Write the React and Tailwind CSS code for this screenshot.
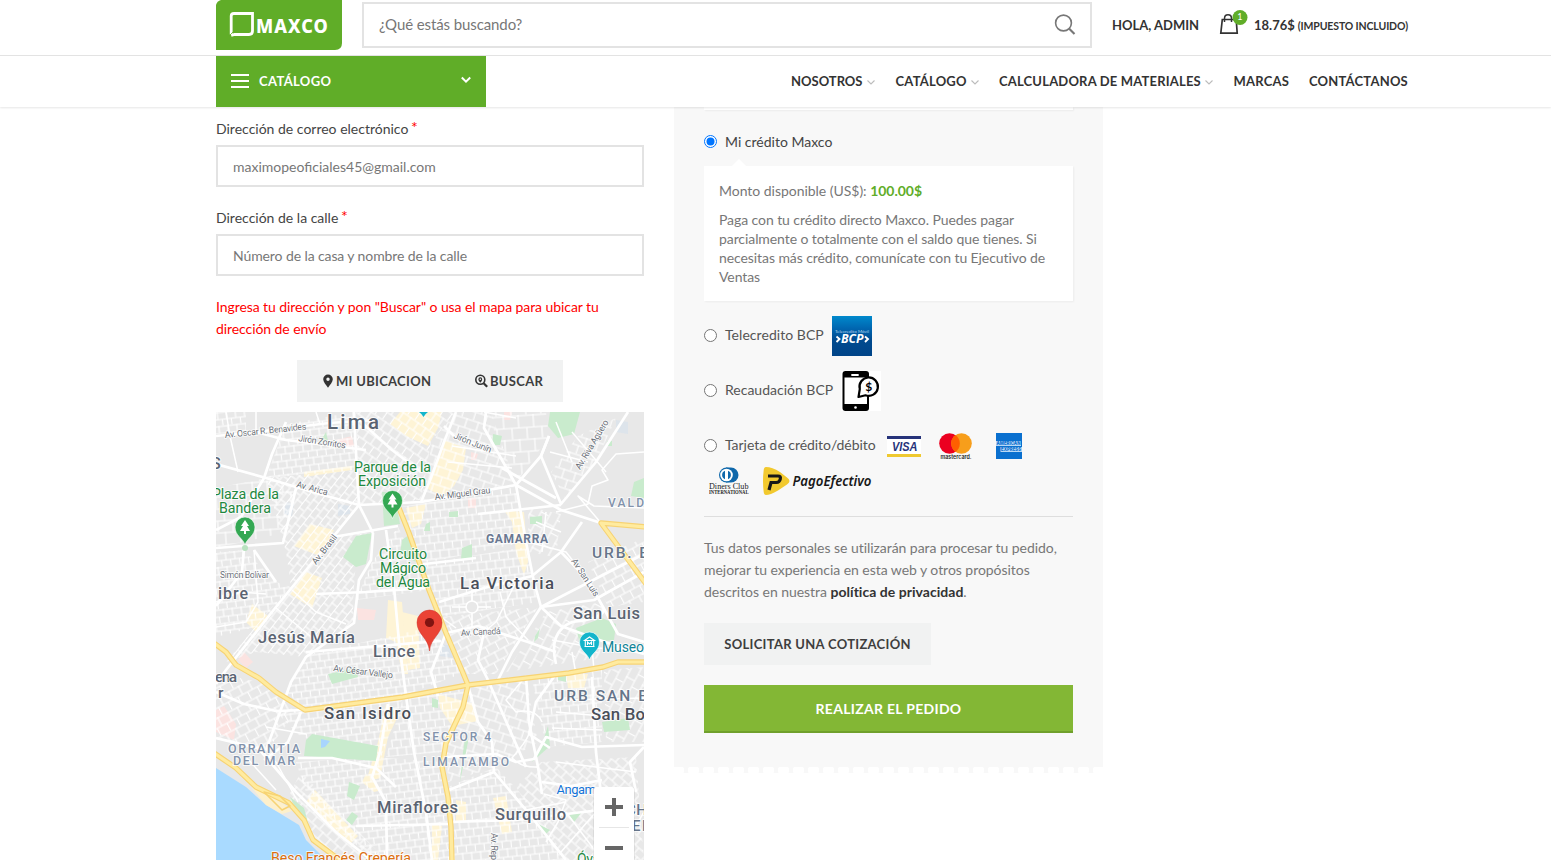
import React from "react";

const ROAD_LABEL = "#6b7078";

// Blocks of minor streets: [polygon, pattern id]
const BLOCKS = [
  ["0,0 30,0 30,20 0,22", "g1"],
  ["70,12 138,0 142,58 50,66", "g1"],
  ["50,66 142,58 143,92 120,124 75,175 70,140", "g2"],
  ["0,76 50,66 80,75 72,120 0,136", "g8"],
  ["0,140 28,138 60,170 75,175 40,215 0,225", "g1"],
  ["140,0 240,0 215,30 205,88 143,92", "g3"],
  ["240,0 275,0 300,73 205,90 216,30", "g4"],
  ["276,0 330,0 333,25 302,68 280,40", "g8"],
  ["120,124 155,121 140,148 137,190 75,175", "g2"],
  ["156,150 182,115 213,178 140,188", "g1"],
  ["185,95 300,75 310,130 200,153", "g5"],
  ["200,153 310,135 322,190 225,205", "g5"],
  ["75,175 137,190 138,211 90,245 40,240 10,250 60,190", "g2"],
  ["90,243 215,215 247,261 187,284 89,297 70,280", "g1"],
  ["225,205 322,195 280,262 250,262", "g6"],
  ["330,200 387,190 384,246 290,260", "g9"],
  ["312,95 345,102 340,145 312,140", "g9"],
  ["372,150 428,126 428,190 392,195", "g6"],
  ["362,24 400,6 380,50 350,88 335,60", "g4"],
  ["60,300 89,298 187,286 165,345 85,325", "g1"],
  ["187,286 250,274 228,340 170,345", "g5"],
  ["80,350 160,345 225,350 235,448 160,448 96,398", "g1"],
  ["85,360 170,448 125,448 97,425 72,385", "g7"],
  ["252,273 310,266 322,330 280,355 232,370 230,335", "g4"],
  ["315,264 386,258 386,330 330,335", "g5"],
  ["388,258 428,255 428,330 390,330", "g9"],
  ["232,375 280,355 322,400 350,448 236,448", "g5"],
  ["325,350 420,345 428,448 345,448 300,375", "g7"],
  ["0,262 45,270 80,300 50,340 0,325", "g6"],
];

const CREAM = [
  "184,0 226,0 222,16 212,34 190,24 174,12",
  "228,28 250,36 247,58 238,74 226,84 210,76 220,52",
  "288,98 308,100 312,150 308,163 300,140 296,110",
  "94,112 118,118 104,144 78,134",
  "90,160 106,166 96,196 74,182",
  "172,188 186,190 192,262 186,262 180,230 170,226",
  "186,200 202,204 204,256 192,258",
  "88,60 136,54 136,58 88,65",
  "170,292 184,300 172,325 164,366 150,370 162,330",
  "222,282 258,292 262,309 236,314 224,296",
  "99,378 142,424 134,432 90,390",
  "240,388 250,390 250,410 240,410",
  "150,362 166,378 158,380 146,370",
  "36,192 52,204 40,220 30,210",
  "216,412 226,414 222,448 216,448",
  "277,386 290,384 296,420 286,422",
  "350,262 372,262 368,276 352,276",
  "190,96 210,92 205,112 196,116",
];

const GREEN = [
  "334,0 364,0 358,22 342,26 332,14",
  "127,145 140,124 156,121 150,152 140,155",
  "90,328 96,322 162,334 160,349 88,344",
  "166,80 178,80 184,112 168,114",
  "186,128 194,122 200,150 184,142",
  "246,136 256,132 256,147 245,147",
  "314,105 326,104 326,112 314,112",
  "360,216 386,206 400,212 398,228 364,232",
  "386,310 412,306 414,318 388,320",
  "133,370 144,374 138,388 131,384",
  "112,262 140,256 142,265 116,272",
  "418,70 428,66 428,86 415,84",
  "277,22 286,24 284,33 276,33",
  "391,29 396,29 396,34 391,34",
  "110,20 112,29 104,30",
  "210,112 214,110 214,119 208,119",
  "216,286 222,288 222,296 216,295",
  "244,370 252,330 250,320 247,340",
  "326,332 332,314 334,334 316,350",
  "136,400 142,404 136,413 130,408",
  "322,412 334,418 330,422 324,418",
  "342,260 350,262 350,270 342,268",
  "74,385 88,396 94,418 82,402",
  "319,224 324,216 322,226 318,230",
  "353,403 366,400 358,410",
  "233,100 242,99 242,105 233,105",
];

const PINK = [
  "120,28 136,24 138,34 126,36",
  "28,240 37,250 30,256 22,248",
  "0,298 8,294 20,312 18,328 0,320",
  "141,196 160,198 158,208 142,208",
  "288,0 296,0 294,8 288,8",
  "252,86 260,86 260,96 252,96",
  "255,40 262,42 260,48 255,48",
];

const ROADS = [
  "M0 24L40 20L113 11L160 8",
  "M70 10L56 42L48 66L25 105L0 118",
  "M0 52L50 66L100 81L143 93L205 90L300 73L325 44L333 24",
  "M138 0L141 60L143 93L157 121",
  "M40 20L70 28L150 38",
  "M145 10L176 38L205 60",
  "M240 0L228 30L215 66L205 90",
  "M228 14L240 26L270 36",
  "M300 73L345 98L385 111",
  "M270 0L268 16L300 73L310 130L318 170L325 195L345 214L400 234L428 242",
  "M333 24L325 44L345 92L380 50L412 0",
  "M286 56L340 86",
  "M143 93L117 125L60 195L10 258L0 272",
  "M157 121L155 148L143 168L138 211L90 245L75 270L50 338",
  "M0 136L67 131L72 110L80 76",
  "M28 136L26 160L0 194",
  "M38 138L60 170",
  "M100 182L150 180L212 176",
  "M117 125L182 114",
  "M200 153L260 146",
  "M262 102L345 93",
  "M223 190L268 176L316 164L345 140L366 110",
  "M345 140L372 168L387 195L402 222L428 230",
  "M325 195L350 182L428 142",
  "M325 195L378 188L428 160",
  "M325 195L296 240L282 268",
  "M340 252Q332 220 356 210Q392 206 387 195",
  "M230 221L262 214L312 230L340 240",
  "M90 240L150 235L225 229",
  "M170 118L178 175L183 230L190 284L198 340L210 400L216 448",
  "M230 221L215 260L222 284",
  "M268 220L262 248L272 268L310 355",
  "M0 280L28 292L60 299L89 298",
  "M0 326L42 336L80 380L120 420L155 448",
  "M85 300L72 330L48 348",
  "M82 346L116 346L160 356L180 375",
  "M172 292L164 340L156 365L170 390L171 448",
  "M228 345L280 342L300 350L318 347L330 325L366 335L428 333",
  "M252 273L262 310L276 330L278 360L310 398L350 448",
  "M233 378L278 360",
  "M140 414L234 412",
  "M234 410L300 408L384 398",
  "M310 264L313 310L322 355L326 382",
  "M340 262L320 290L313 322L334 336",
  "M376 265L380 340L386 390",
  "M326 370L355 374L386 368",
  "M428 335L414 350L420 380",
];

const SIDE_ROADS = [
  "M428 40L400 42L386 58L392 68L376 74L372 92L340 100",
  "M385 111L362 84L378 94L428 96",
  "M10 0L14 24L22 60M40 0L40 20M100 0L104 12",
  "M0 190L24 180L50 182M38 138L42 190L30 210L0 215",
  "M76 178L100 200L130 212M60 196L104 232",
  "M334 40L372 50M340 10L356 50M356 20L390 60",
  "M320 110L345 120M312 130L350 140L372 168M330 100L326 140",
  "M268 0L300 6M236 34L300 44M232 50L296 56",
  "M40 336L60 350L82 390M30 345L60 378M50 315L90 322",
  "M322 355Q306 356 296 346Q310 330 313 322",
  "M310 264L290 288L300 300Q320 296 326 310",
  "M340 300L386 304M336 316L386 318M350 288L428 286",
  "M340 350L420 360M328 382L350 388L342 410L330 430",
  "M350 400L380 440M310 398L350 390M380 400L345 440M428 400L400 448",
  "M284 180L290 205L312 228M300 170L280 210L268 220M225 205L240 216",
  "M356 240L360 262M376 236L378 258M336 228L380 236L428 238",
];

const YELLOW = [
  "M183 96L193 121L213 178L230 221L247 261L252 273L247 295L230 331L226 355L232 385L235 415L236 450",
  "M-2 231L10 240L20 253L43 266L60 280L89 298L187 285L252 273L353 261L387 255L402 250L430 250",
  "M430 115L385 111L430 172",
  "M-2 341L20 356L40 375L73 391L88 408L97 428L117 443L132 452",
];

function Label({ x, y, w, size = 15, color = "#5b6472", weight = 500, r = 0, children }) {
  return (
    <text
      x={x}
      y={y}
      textLength={w}
      fontSize={size}
      fill={color}
      fontWeight={weight}
      transform={r ? `rotate(${r} ${x} ${y})` : undefined}
      stroke="#fff"
      strokeOpacity="0.75"
      strokeWidth="2"
      strokeLinejoin="round"
      paintOrder="stroke"
    >
      {children}
    </text>
  );
}

function Pin({ x, y, color, children }) {
  return (
    <g transform={`translate(${x} ${y})`}>
      <path d="M0 0C-2-7-10-9-10-18A10 10 0 0 1 10-18C10-9 2-7 0 0Z" fill={color} stroke="#fff" strokeWidth=".6" />
      {children}
    </g>
  );
}

function Grid({ id, a, w, h }) {
  return (
    <pattern id={id} width={w} height={h * 2} patternUnits="userSpaceOnUse" patternTransform={`rotate(${a})`}>
      <path d={`M0 1H${w}M0 ${h + 1}H${w}M1 0V${h + 1}M${w * 0.6} ${h + 1}V${h * 2}`} stroke="#fff" strokeWidth="1.1" fill="none" />
    </pattern>
  );
}

function Tree() {
  return <path d="M0-25L-4-19H-2L-5-14H-1V-11H1V-14H5L2-19H4Z" fill="#fff" />;
}

function CityMap() {
  return (
    <svg className="block h-full w-full" viewBox="0 0 428 448" fontFamily="Roboto, sans-serif">
      <defs>
        <Grid id="g1" a={-7} w={9} h={7} />
        <Grid id="g2" a={-52} w={10} h={6.5} />
        <Grid id="g3" a={35} w={9} h={9} />
        <Grid id="g4" a={18} w={12} h={9} />
        <Grid id="g5" a={-6} w={9} h={8} />
        <Grid id="g6" a={-28} w={11} h={9} />
        <Grid id="g7" a={42} w={10} h={8} />
        <Grid id="g8" a={-4} w={15} h={12} />
        <Grid id="g9" a={-62} w={14} h={9} />
      </defs>
      <rect width="428" height="448" fill="#e8e8e8" />
      {CREAM.map((p) => <polygon key={p} points={p} fill="#fef4d6" />)}
      {PINK.map((p) => <polygon key={p} points={p} fill="#fbe3e1" />)}
      <path d="M224 232l14 2v12l-14-2zM70 90l8 2-2 12-8-2zM122 92l12 2v8l-12 2zM400 8l12 2v12l-12-2z" fill="#dde4eb" />
      <g>
        {BLOCKS.map(([p, g]) => <polygon key={p} points={p} fill={`url(#${g})`} />)}
      </g>
      {GREEN.map((p) => <polygon key={p} points={p} fill="#c9ebcd" />)}
      <path d="M105 327l9 2-5 6-4 1z" fill="#a8d5fd" />
      <path d="M0 356L30 375L50 393L83 413L90 428L110 448H0Z" fill="#a9daff" />
      <path d="M36 376L50 393L66 402L76 399L50 378Z" fill="#fdf0cc" />
      <g fill="none" stroke="#fff" strokeWidth="1.5" strokeLinejoin="round">
        {SIDE_ROADS.map((d) => <path key={d} d={d} />)}
      </g>
      <g fill="none" stroke="#fff" strokeWidth="2.7" strokeLinejoin="round">
        {ROADS.map((d) => <path key={d} d={d} />)}
        <circle cx="256" cy="195" r="6" fill="#e8e8e8" strokeWidth="1.6" />
        <path d="M256 189V178M262 195H275M250 195H236M256 201V216" strokeWidth="1.6" />
      </g>
      <g fill="none" strokeLinejoin="round">
        {YELLOW.map((d) => <path key={d} d={d} stroke="#f7d374" strokeWidth="5.4" />)}
        {YELLOW.map((d) => <path key={d} d={d} stroke="#ffeb9f" strokeWidth="3.2" />)}
        <path d="M48 380L64 384L74 394L66 398Z" stroke="#f7d374" strokeWidth="1.6" />
      </g>

      <Label x={9} y={26} w={82} size={9} color={ROAD_LABEL} weight={400} r={-6}>Av. Oscar R. Benavides</Label>
      <Label x={82} y={29} w={48} size={9} color={ROAD_LABEL} weight={400} r={9}>Jirón Zorritos</Label>
      <Label x={237} y={26} w={40} size={9} color={ROAD_LABEL} weight={400} r={22}>Jirón Junín</Label>
      <Label x={364} y={58} w={56} size={9} color={ROAD_LABEL} weight={400} r={-59}>Av. Riva Agüero</Label>
      <Label x={80} y={75} w={32} size={9} color={ROAD_LABEL} weight={400} r={15}>Av. Arica</Label>
      <Label x={219} y={88} w={56} size={9} color={ROAD_LABEL} weight={400} r={-7}>Av. Miguel Grau</Label>
      <Label x={100} y={153} w={35} size={9} color={ROAD_LABEL} weight={400} r={-52}>Av. Brasil</Label>
      <Label x={4} y={166} w={49} size={9} color={ROAD_LABEL} weight={400} r={0}>Simón Bolívar</Label>
      <Label x={355} y={149} w={43} size={9} color={ROAD_LABEL} weight={400} r={57}>Av San Luis</Label>
      <Label x={245} y={224} w={40} size={9} color={ROAD_LABEL} weight={400} r={-3}>Av. Canadá</Label>
      <Label x={117} y={259} w={60} size={9} color={ROAD_LABEL} weight={400} r={7}>Av. César Vallejo</Label>
      <Label x={275} y={421} w={27} size={9} color={ROAD_LABEL} weight={400} r={90}>Av. Rep</Label>

      <Label x={111} y={17} w={52} size={20.5}>Lima</Label>
      <Label x={-5} y={57} w={12} size={16}>S</Label>
      <Label x={244} y={177} w={94} size={16.8} color="#4a4f5a">La Victoria</Label>
      <Label x={357} y={207} w={67} size={16.5}>San Luis</Label>
      <Label x={42} y={231} w={97} size={16.5}>Jesús María</Label>
      <Label x={157} y={245} w={42} size={16.5}>Lince</Label>
      <Label x={2} y={187} w={30} size={16}>ibre</Label>
      <Label x={-1} y={270} w={22} size={15.5}>ena</Label>
      <Label x={2} y={286} w={6} size={15.5}>r</Label>
      <Label x={108} y={307} w={87} size={16.8} color="#4a4f5a">San Isidro</Label>
      <Label x={375} y={308} w={74} size={16.8} color="#4a4f5a">San Borja</Label>
      <Label x={161} y={401} w={81} size={16.5}>Miraflores</Label>
      <Label x={279} y={408} w={71} size={16.5}>Surquillo</Label>
      <Label x={270} y={131} w={62} size={12} color="#6a7891" weight={700}>GAMARRA</Label>
      <Label x={376} y={146} w={56} size={15.5} color="#66758a">URB. E</Label>
      <Label x={338} y={289} w={94} size={15.5} color="#66758a">URB SAN B</Label>
      <Label x={392} y={95} w={36} size={12} color="#8292ab">VALD</Label>
      <Label x={207} y={329} w={68} size={12} color="#8292ab">SECTOR 4</Label>
      <Label x={207} y={354} w={86} size={12} color="#8292ab">LIMATAMBO</Label>
      <Label x={12} y={341} w={72} size={12.5} color="#8292ab">ORRANTIA</Label>
      <Label x={17} y={353} w={62} size={12.5} color="#8292ab">DEL MAR</Label>
      <Label x={410} y={403} w={21} size={15} color="#66758a">CH</Label>
      <Label x={416} y={419} w={18} size={15} color="#66758a">EL</Label>

      <Label x={138} y={60} w={77} size={14.2} color="#1e8840" weight={400}>Parque de la</Label>
      <Label x={142} y={74} w={68} size={14.2} color="#1e8840" weight={400}>Exposición</Label>
      <Label x={-4} y={87} w={67} size={14.2} color="#1e8840" weight={400}>Plaza de la</Label>
      <Label x={3} y={101} w={52} size={14.2} color="#1e8840" weight={400}>Bandera</Label>
      <Label x={163} y={147} w={48} size={14.2} color="#1e8840" weight={400}>Circuito</Label>
      <Label x={164} y={161} w={46} size={14.2} color="#1e8840" weight={400}>Mágico</Label>
      <Label x={160} y={175} w={54} size={14.2} color="#1e8840" weight={400}>del Agua</Label>
      <Label x={386} y={240} w={42} size={14} color="#0f8498" weight={400}>Museo</Label>
      <Label x={340.5} y={382} w={39.5} size={13} color="#1474d8" weight={400}>Angam</Label>
      <Label x={55} y={451} w={140} size={14.2} color="#dc6f10" weight={400}>Beso Francés Crepería</Label>
      <Label x={361} y={452} w={34} size={14} color="#1e8840" weight={400}>Óvalo</Label>

      <Pin x={176.5} y={106.5} color="#34a853"><Tree /></Pin>
      <circle cx="29" cy="136" r="3" fill="#b9e2c0" />
      <Pin x={29} y={133} color="#34a853"><Tree /></Pin>
      <Pin x={373.5} y={248} color="#12b5cb">
        <path d="M-5-19.500L0-23L5-19.500ZM-5-13.500H5M-4.200-14V-19M4.200-14V-19M-2-15V-18L0-16L2-18V-15" fill="none" stroke="#fff" strokeWidth="1.100" />
      </Pin>
      <path d="M203 0H212Q209 2 207.500 5Q206 2 203 0Z" fill="#12b5cb" />
      <path d="M213.500 239C212.500 226 201 222 201 210.500A12.500 12.500 0 0 1 226 210.500C226 222 214.500 226 213.500 239Z" fill="#ea4335" stroke="#d0342a" strokeWidth=".5" />
      <circle cx="213.500" cy="210.500" r="4.600" fill="#811411" />

      <rect x="377.500" y="375" width="41" height="81" rx="2" fill="#000" opacity=".12" />
      <rect x="378" y="375" width="40" height="80" rx="2" fill="#fff" />
      <path d="M383 415.500H413" stroke="#e6e6e6" />
      <path d="M389 395H407M398 386V404M389 436H407" stroke="#666" strokeWidth="4" />
    </svg>
  );
}

function Chevron() {
  return (
    <svg className="ml-1 h-2 w-2" viewBox="0 0 8 8" fill="none" stroke="#bcbcbc" strokeWidth="1.1">
      <path d="M.5 2.500L4 6L7.500 2.500" />
    </svg>
  );
}

function NavItem({ text, arrow, className }) {
  return (
    <a className={`flex items-center whitespace-nowrap ${className}`}>
      {text}
      {arrow && <Chevron />}
    </a>
  );
}

function Header() {
  return (
    <header className="relative z-10 flex h-[107px] shrink-0 flex-col bg-white text-[13px] font-bold text-[#333] shadow-[0_1px_2px_rgba(0,0,0,0.1)]">
      <div className="h-14 border-b border-[#e3e3e3]">
        <div className="ml-[216px] flex w-[1192px] items-start">
          <svg className="h-[50px] w-[126px] shrink-0" viewBox="0 0 126 50">
            <path d="M5 0H126V43Q126 50 119 50H0V5Q1 1 5 0Z" fill="#60ad28" />
            <path d="M15.200 34.500V16Q15.200 13.500 18 13.500H36.500V31Q36.500 34.500 33 34.500H18.500L15.200 35.500" fill="none" stroke="#fff" strokeWidth="2.800" />
            <path d="M13 36L18 31" stroke="#60ad28" strokeWidth=".8" />
            <text x="40" y="32.500" textLength="73" lengthAdjust="spacingAndGlyphs" fontFamily="'Noto Sans', sans-serif" fontWeight="800" letterSpacing="1.2" fontSize="20" fill="#fff">MAXCO</text>
          </svg>
          <div className="mt-0.5 ml-5 flex h-[46px] w-[730px] shrink-0 items-center justify-between border-2 border-[#e3e3e3] pr-3.5 pl-[15px] text-[15px] font-normal text-[#777]">
            <span className="tracking-[-0.1px]">¿Qué estás buscando?</span>
            <svg className="h-[22px] w-[22px]" viewBox="0 0 22 22" fill="none" stroke="#777" strokeWidth="1.600">
              <circle cx="9.500" cy="9" r="7.900" />
              <path d="M15 14.500L20.500 20" strokeWidth="2.100" />
            </svg>
          </div>
          <span className="ml-5 flex h-[50px] w-[87px] shrink-0 items-center whitespace-nowrap">HOLA, ADMIN</span>
          <svg className="mt-2 ml-5 h-7 w-[30px] shrink-0" viewBox="0 0 30 28">
            <path d="M3.300 11.500H17.200L18.200 25.200H1.800Z" fill="none" stroke="#333" strokeWidth="1.700" />
            <path d="M5.500 14V10.500Q5.500 6.800 9 6.800Q12.500 6.800 12.500 10.500V14" fill="none" stroke="#333" strokeWidth="1.500" />
            <circle cx="21" cy="9.500" r="7.500" fill="#60ad28" />
            <text x="20.800" y="12" textAnchor="middle" fontSize="9" fontWeight="400" fill="#fff">1</text>
          </svg>
          <span className="ml-[5px] flex h-[50px] items-center gap-[3px] whitespace-nowrap">
            18.76$ <span className="pt-[2px] text-[10.500px] tracking-[-0.13px]">(IMPUESTO INCLUIDO)</span>
          </span>
        </div>
      </div>
      <div className="ml-[216px] flex h-[51px] w-[1192px] items-center justify-between">
        <div className="flex h-full w-[270px] items-center bg-[#60ad28] pr-[15px] pl-[15px] text-white">
          <svg className="h-4 w-[18px]" viewBox="0 0 18 16" stroke="#fff" strokeWidth="2">
            <path d="M0 1H18M0 7H18M0 13H18" />
          </svg>
          <span className="ml-2.5 tracking-[0.35px]">CATÁLOGO</span>
          <svg className="mb-[3px] ml-auto h-2.5 w-2.5" viewBox="0 0 10 10" fill="none" stroke="#fff" strokeWidth="2">
            <path d="M.8 2.500L5 6.700L9.200 2.500" />
          </svg>
        </div>
        <nav className="flex items-center">
          <NavItem className="w-[104.500px]" text="NOSOTROS" arrow />
          <NavItem className="w-[103.500px] tracking-[0.22px]" text="CATÁLOGO" arrow />
          <NavItem className="w-[234.500px] tracking-[0.18px]" text="CALCULADORA DE MATERIALES" arrow />
          <NavItem className="w-[75.500px] tracking-[0.2px]" text="MARCAS" />
          <NavItem className="w-[99px] tracking-[0.2px]" text="CONTÁCTANOS" />
        </nav>
      </div>
    </header>
  );
}

function Field({ label, value, valueClass = "" }) {
  return (
    <div>
      <div className="h-[22px] leading-[22px] text-[#444]">
        {label} <span className="relative -top-px -left-px text-base leading-none text-[#ff0000]">*</span>
      </div>
      <div className={`mt-[5px] flex h-[42px] items-center border-2 border-[#e3e3e3] px-[15px] pt-0.5 text-[#777] ${valueClass}`}>{value}</div>
    </div>
  );
}

function Radio({ checked }) {
  return (
    <svg className="mr-2 h-[13px] w-[13px] shrink-0" viewBox="0 0 13 13">
      <circle cx="6.500" cy="6.500" r="6" fill="#fff" stroke={checked ? "#0075ff" : "#767676"} />
      {checked && <circle cx="6.500" cy="6.500" r="4" fill="#0075ff" />}
    </svg>
  );
}

function PaymentOption({ label, labelClass = "", children }) {
  return (
    <div className="mt-[15px] flex h-10 shrink-0 items-center text-[#555]">
      <div className="mb-0.5 flex items-center">
        <Radio />
        <span className={`whitespace-nowrap ${labelClass}`}>{label}</span>
      </div>
      {children}
    </div>
  );
}

function BcpLogo() {
  return (
    <svg className="ml-2 h-10 w-10" viewBox="0 0 40 40">
      <defs>
        <linearGradient id="bcp" x1="0" y1="0" x2="0" y2="1">
          <stop offset="0" stopColor="#0089cc" />
          <stop offset=".3" stopColor="#0067b1" />
          <stop offset=".6" stopColor="#004a8f" />
          <stop offset="1" stopColor="#004488" />
        </linearGradient>
      </defs>
      <rect width="40" height="40" fill="url(#bcp)" />
      <text x="3" y="16.500" textLength="34" fontSize="4.500" fill="#b5d4ec">Telecredito Móvil</text>
      <path d="M4.500 20.500L7.500 23L4.500 26M33 20.500L36 23L33 26" fill="none" stroke="#fff" strokeWidth="1.900" />
      <text x="9" y="27.300" textLength="22.500" lengthAdjust="spacingAndGlyphs" fontFamily="'Open Sans', sans-serif" fontSize="11.500" fontWeight="700" fontStyle="italic" fill="#fff">BCP</text>
    </svg>
  );
}

function PhoneLogo() {
  return (
    <svg className="ml-2 h-10 w-10" viewBox="0 0 40 40">
      <rect width="40" height="40" fill="#fff" />
      <rect x="1.500" y="0" width="26.500" height="40" rx="3" fill="#000" />
      <rect x="3.500" y="6.500" width="22.500" height="26.500" fill="#fff" />
      <path d="M11 4H17" stroke="#fff" strokeWidth="1.800" strokeLinecap="round" />
      <circle cx="14.500" cy="36.500" r="1.300" fill="#fff" />
      <path d="M17.500 26L18.800 18A9.200 9.200 0 1 1 24.500 24.300Z" fill="#fff" stroke="#000" strokeWidth="2.200" strokeLinejoin="round" />
      <text x="27.800" y="20" textAnchor="middle" fontSize="12" fontWeight="700" fill="#000">$</text>
    </svg>
  );
}

function VisaLogo() {
  return (
    <svg className="ml-[11px] h-[21px] w-[34px]" viewBox="0 0 34 21">
      <rect width="34" height="21" fill="#fff" />
      <rect width="34" height="3" fill="#26337a" />
      <rect y="18" width="34" height="3" fill="#efc930" />
      <text x="5" y="14.700" textLength="25.500" lengthAdjust="spacingAndGlyphs" fontFamily="'Liberation Sans', sans-serif" fontSize="12.500" fontWeight="700" fontStyle="italic" fill="#26337a">VISA</text>
    </svg>
  );
}

function MastercardLogo() {
  return (
    <svg className="ml-[18px] mr-px h-[27px] w-[33px]" viewBox="0 0 33 27">
      <circle cx="10.500" cy="10.500" r="10.300" fill="#eb0020" />
      <circle cx="22.500" cy="10.500" r="10.300" fill="#f79e1b" />
      <path d="M16.500 2.100A10.300 10.300 0 0 1 16.500 18.900A10.300 10.300 0 0 1 16.500 2.100Z" fill="#ff5f00" />
      <text x="1.500" y="25.500" textLength="31" lengthAdjust="spacingAndGlyphs" fontFamily="Inter, sans-serif" fontSize="5.500" fontWeight="600" fill="#222">mastercard.</text>
    </svg>
  );
}

function AmexLogo() {
  return (
    <svg className="ml-[23px] h-[26px] w-[26px]" viewBox="0 0 26 26" fontFamily="Inter, sans-serif" fontWeight="800" fontSize="5">
      <rect width="26" height="26" fill="#0a70cf" />
      <rect x="0" y="8" width="25" height="5" fill="#b9d9f5" />
      <rect x="4.500" y="14" width="21.500" height="5" fill="#b9d9f5" />
      <text x=".5" y="12.300" textLength="24" lengthAdjust="spacingAndGlyphs" fill="#0a70cf">AMERICAN</text>
      <text x="5" y="18.300" textLength="20" lengthAdjust="spacingAndGlyphs" fill="#0a70cf">EXPRESS</text>
    </svg>
  );
}

function DinersLogo() {
  return (
    <svg className="h-7 w-10" viewBox="0 0 40 28" fontFamily="'Liberation Serif', serif" fill="#222">
      <path d="M17 .5H22A7.500 7.500 0 0 1 22 15.500H17Z" fill="#0f68ab" />
      <circle cx="17.500" cy="8" r="7.500" fill="#0f68ab" />
      <circle cx="17.500" cy="8" r="6.300" fill="#fff" />
      <path d="M16 3.800A4.500 4.500 0 0 0 16 12.200ZM19 3.800A4.500 4.500 0 0 1 19 12.200Z" fill="#0f68ab" />
      <text x="0" y="22.300" textLength="39.500" lengthAdjust="spacingAndGlyphs" fontSize="8.800">Diners Club</text>
      <text x="0" y="27" textLength="39.500" lengthAdjust="spacingAndGlyphs" fontSize="5.400" fontWeight="700">INTERNATIONAL</text>
    </svg>
  );
}

function PagoEfectivoLogo() {
  return (
    <svg className="ml-3.5 h-7 w-[110px]" viewBox="0 0 110 28">
      <path d="M3 0Q9 0 17 5L24 10.500Q29 14 24 17.500L15 23.500Q7 28 3 28Q1 28 .7 25Q-.7 14 .7 3Q1 0 3 0Z" fill="#f2c92e" />
      <path d="M5 9H15Q18 9 17.300 12Q16.600 15.500 13.300 15.500H8L6 23" fill="none" stroke="#181818" strokeWidth="3.200" />
      <text x="29.500" y="19" textLength="79" lengthAdjust="spacingAndGlyphs" fontFamily="'Noto Sans', sans-serif" fontSize="14" fontWeight="600" fontStyle="italic" fill="#181818">PagoEfectivo</text>
    </svg>
  );
}

function Payment() {
  return (
    <section className="flex w-[429px] flex-col">
      <div className="flex h-[660px] flex-col bg-[#f8f8f8] px-[30px]">
        <div className="h-[3px] shrink-0 bg-white shadow-[1px_1px_2px_rgba(0,0,0,0.05)]" />
        <div className="mt-5 flex h-6 items-center text-[#444]">
          <span className="mb-0.5"><Radio checked /></span>
          Mi crédito Maxco
        </div>
        <svg className="mt-[5px] ml-7 h-[7px] w-[14px] shrink-0" viewBox="0 0 14 7">
          <path d="M0 7L7 0L14 7Z" fill="#fff" />
        </svg>
        <div className="flex h-[135px] shrink-0 flex-col bg-white px-[15px] pt-[15px] leading-[19px] text-[#777] shadow-[1px_1px_2px_rgba(0,0,0,0.05)]">
          <p className="tracking-[-0.03px]">Monto disponible (US$): <b className="text-[#60ad28]">100.00$</b></p>
          <p className="mt-2.5 tracking-[-0.08px] whitespace-nowrap">
            Paga con tu crédito directo Maxco. Puedes pagar<br />
            parcialmente o totalmente con el saldo que tienes. Si<br />
            necesitas más crédito, comunícate con tu Ejecutivo de<br />
            Ventas
          </p>
        </div>
        <PaymentOption label="Telecredito BCP" labelClass="tracking-[0.05px]">
          <BcpLogo />
        </PaymentOption>
        <PaymentOption label="Recaudación BCP">
          <PhoneLogo />
        </PaymentOption>
        <PaymentOption label="Tarjeta de crédito/débito" labelClass="tracking-[-0.05px]">
          <VisaLogo />
          <MastercardLogo />
          <AmexLogo />
        </PaymentOption>
        <div className="mt-[1px] flex h-7 shrink-0 items-center pl-[5px]">
          <DinersLogo />
          <PagoEfectivoLogo />
        </div>
        <div className="mt-[21px] h-px shrink-0 bg-[#dedede]" />
        <p className="mt-5 leading-[22px] tracking-[-0.045px] whitespace-nowrap text-[#777]">
          Tus datos personales se utilizarán para procesar tu pedido,<br />
          mejorar tu experiencia en esta web y otros propósitos<br />
          descritos en nuestra <b className="tracking-[0.03px] text-[#333]">política de privacidad</b>.
        </p>
        <button className="mt-5 h-[42px] w-[227px] shrink-0 bg-[#f1f2f2] text-[13px] font-bold tracking-[0.3px] whitespace-nowrap text-[#3e3e3e]">SOLICITAR UNA COTIZACIÓN</button>
        <button className="mt-5 h-12 shrink-0 border-b-2 border-[#70a02c] bg-[#83b735] pt-0.5 text-sm font-bold tracking-[0.3px] text-white">REALIZAR EL PEDIDO</button>
      </div>
      <svg className="h-[6px] w-full" viewBox="0 0 429 6">
        <defs>
          <pattern id="scallop" x="9" width="15" height="6" patternUnits="userSpaceOnUse">
            <path d="M0 0H6L5 1.500V5L5.500 6H.5L1 5V1.500Z" fill="#f8f8f8" />
          </pattern>
        </defs>
        <rect width="429" height="6" fill="url(#scallop)" />
      </svg>
    </section>
  );
}

export default function App() {
  return (
    <div className="flex h-[860px] w-[1551px] flex-col overflow-hidden bg-white font-['Lato',sans-serif] text-sm">
      <Header />
      <main className="ml-[216px] flex min-h-0 flex-1 items-start gap-[30px]">
        <section className="flex w-[428px] shrink-0 flex-col pt-[11px]">
          <Field label="Dirección de correo electrónico" value="maximopeoficiales45@gmail.com" />
          <div className="mt-5">
            <Field label="Dirección de la calle" value="Número de la casa y nombre de la calle" valueClass="tracking-[-0.1px]" />
          </div>
          <p className="mt-5 leading-[22px] tracking-[-0.075px] text-[#ff0000]">
            Ingresa tu dirección y pon "Buscar" o usa el mapa para ubicar tu<br />
            dirección de envío
          </p>
          <div className="mt-5 flex h-[42px] justify-center text-[13px] font-bold tracking-[0.3px] text-[#3e3e3e]">
            <button className="flex w-[152px] items-center bg-[#f1f2f2] pl-[26px] whitespace-nowrap">
              <svg className="mr-[3px] h-3.5 w-2.5" viewBox="0 0 10 14">
                <path fillRule="evenodd" d="M5 .5A4.800 4.800 0 0 1 9.800 5.300C9.800 8 7 11 5 13.800C3 11 .2 8 .2 5.300A4.800 4.800 0 0 1 5 .5ZM5 3.600A1.700 1.700 0 1 0 5 7A1.700 1.700 0 1 0 5 3.600Z" fill="#333" />
              </svg>
              MI UBICACION
            </button>
            <button className="flex w-[114px] items-center bg-[#f1f2f2] pl-[26px] whitespace-nowrap">
              <svg className="mr-[2px] h-3.5 w-[13px]" viewBox="0 0 13 14" fill="none" stroke="#333">
                <circle cx="5.300" cy="5.800" r="4.500" strokeWidth="1.600" />
                <path d="M8.600 9.200L12.200 12.800" strokeWidth="2.200" />
                <path d="M5.300 8.800C3.500 6.500 3.400 6 3.400 5.200A1.900 1.900 0 0 1 7.200 5.200C7.200 6 7 6.500 5.300 8.800Z" fill="#333" stroke="none" />
                <circle cx="5.300" cy="5.200" r=".7" fill="#fff" stroke="none" />
              </svg>
              BUSCAR
            </button>
          </div>
          <div className="mt-2.5 h-[448px] shrink-0 overflow-hidden">
            <CityMap />
          </div>
        </section>
        <Payment />
      </main>
    </div>
  );
}
